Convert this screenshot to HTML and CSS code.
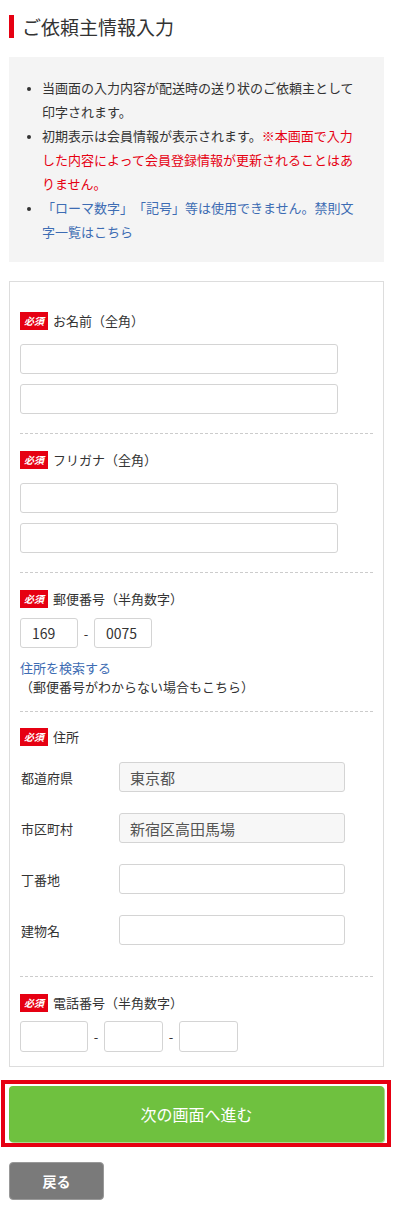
FILE: index.html
```html
<!DOCTYPE html>
<html lang="ja">
<head>
    <meta charset="UTF-8">
    <meta name="viewport" content="width=device-width, initial-scale=1.0">
    <title>ご依頼主情報入力</title>
    <link rel="stylesheet" href="styles.css">
</head>
<body>
    <div class="page">
        <h1 class="page-title">ご依頼主情報入力</h1>

        <div class="notice">
            <ul>
                <li>当画面の入力内容が配送時の送り状のご依頼主として印字されます。</li>
                <li>初期表示は会員情報が表示されます。<span class="warn">※本画面で入力した内容によって会員登録情報が更新されることはありません。</span></li>
                <li><a href="#" class="link">「ローマ数字」「記号」等は使用できません。禁則文字一覧はこちら</a></li>
            </ul>
        </div>

        <form class="form-box">
            <div class="section first">
                <div class="label"><span class="badge">必須</span>お名前（全角）</div>
                <div class="name-inputs">
                    <input type="text" class="text-input">
                    <input type="text" class="text-input">
                </div>
            </div>

            <div class="section">
                <div class="label"><span class="badge">必須</span>フリガナ（全角）</div>
                <div class="name-inputs">
                    <input type="text" class="text-input">
                    <input type="text" class="text-input">
                </div>
            </div>

            <div class="section zip">
                <div class="label"><span class="badge">必須</span>郵便番号（半角数字）</div>
                <div class="split-row">
                    <input type="text" class="text-input zip-input" value="169">
                    <span class="dash">-</span>
                    <input type="text" class="text-input zip-input" value="0075">
                </div>
                <a href="#" class="link search-link">住所を検索する</a>
                <p class="note">（郵便番号がわからない場合もこちら）</p>
            </div>

            <div class="section address">
                <div class="label"><span class="badge">必須</span>住所</div>
                <div class="address-rows">
                    <div class="address-row">
                        <span class="row-label">都道府県</span>
                        <input type="text" class="text-input readonly" value="東京都" readonly>
                    </div>
                    <div class="address-row">
                        <span class="row-label">市区町村</span>
                        <input type="text" class="text-input readonly" value="新宿区高田馬場" readonly>
                    </div>
                    <div class="address-row">
                        <span class="row-label">丁番地</span>
                        <input type="text" class="text-input">
                    </div>
                    <div class="address-row">
                        <span class="row-label">建物名</span>
                        <input type="text" class="text-input">
                    </div>
                </div>
            </div>

            <div class="section last">
                <div class="label"><span class="badge">必須</span>電話番号（半角数字）</div>
                <div class="split-row tel">
                    <input type="text" class="text-input tel-first">
                    <span class="dash">-</span>
                    <input type="text" class="text-input tel-input">
                    <span class="dash">-</span>
                    <input type="text" class="text-input tel-input">
                </div>
            </div>
        </form>

        <div class="next-frame">
            <button type="button" class="next-button">次の画面へ進む</button>
        </div>

        <button type="button" class="back-button">戻る</button>
    </div>
</body>
</html>
```

FILE: styles.css
```css
/* Base */
* {
    margin: 0;
    padding: 0;
    box-sizing: border-box;
}

body {
    font-family: "Noto Sans CJK JP", "Noto Sans", sans-serif;
    color: #333;
    background-color: #fff;
    text-spacing-trim: space-all;
}

.page {
    padding: 15px 9px 25px;
}

.page-title {
    border-left: 5px solid #e60012;
    padding-left: 8px;
    font-size: 19px;
    line-height: 23px;
    font-weight: normal;
    color: #333;
}

/* Notice box */
.notice {
    margin-top: 19px;
    background-color: #f4f4f4;
    padding: 19px 24px 18px;
}

.notice ul {
    padding-left: 9px;
}

.notice li {
    font-size: 13px;
    line-height: 24px;
    list-style: disc;
}

.notice li::marker {
    font-size: 11px;
}

.warn {
    color: #e60012;
}

.link {
    color: #3d6cb3;
    text-decoration: none;
}

/* Form */
.form-box {
    margin-top: 19px;
    border: 1px solid #ddd;
    padding: 0 10px;
}

.section {
    padding: 17px 0 19px;
    border-bottom: 1px dashed #ccc;
}

.section.first {
    padding-top: 30px;
}

.section.zip {
    padding-bottom: 15px;
}

.section.address {
    padding-top: 16px;
    padding-bottom: 31px;
}

.section.last {
    padding-top: 17px;
    padding-bottom: 14px;
    border-bottom: none;
}

.label {
    display: flex;
    align-items: center;
    gap: 5px;
    font-size: 13px;
    line-height: 18px;
}

.badge {
    display: inline-block;
    width: 28px;
    height: 18px;
    line-height: 18px;
    background-color: #e60012;
    color: #fff;
    font-size: 10px;
    font-weight: bold;
    font-style: italic;
    text-align: center;
}

.text-input {
    display: block;
    height: 30px;
    border: 1px solid #d4d4d4;
    border-radius: 3px;
    background-color: #fff;
    font-family: inherit;
    font-size: 14px;
    color: #333;
    padding: 0 10px;
    outline: none;
}

.name-inputs {
    margin-top: 14px;
    display: flex;
    flex-direction: column;
    gap: 10px;
}

.name-inputs .text-input {
    width: 318px;
}

.split-row {
    margin-top: 10px;
    display: flex;
    align-items: center;
    gap: 5px;
}

.split-row.tel {
    margin-top: 9px;
}

.dash {
    font-size: 13px;
    width: 6px;
    text-align: center;
}

.zip-input {
    width: 58px;
    padding-left: 11px;
}

.tel-first {
    width: 68px;
    height: 31px;
}

.tel-input {
    width: 59px;
    height: 31px;
}

.search-link {
    display: block;
    margin-top: 10px;
    font-size: 13px;
    line-height: 19px;
}

.note {
    font-size: 13px;
    line-height: 19px;
}

/* Address */
.address-rows {
    margin-top: 16px;
    display: flex;
    flex-direction: column;
    gap: 21px;
}

.address-row {
    display: flex;
    align-items: center;
}

.row-label {
    width: 99px;
    padding-left: 1px;
    font-size: 13px;
}

.address-row .text-input {
    width: 226px;
}

.text-input.readonly {
    background-color: #f7f7f7;
    color: #555;
    font-size: 15px;
}

/* Buttons */
.next-frame {
    margin: 13px -7px 0 -8px;
    border: 4px solid #e60012;
    padding: 2px 3px 1px 4px;
}

.next-button {
    display: block;
    width: 100%;
    height: 56px;
    border: none;
    border-radius: 4px;
    background-color: #6fc13f;
    box-shadow: 1px 1px 0 #a9d98c;
    color: #fff;
    font-family: inherit;
    font-size: 16px;
    cursor: pointer;
}

.back-button {
    display: block;
    margin-top: 15px;
    width: 95px;
    height: 38px;
    border: 1px solid #999;
    border-radius: 4px;
    background-color: #7a7a7a;
    color: #fff;
    font-family: inherit;
    font-size: 14px;
    font-weight: bold;
    cursor: pointer;
}
```
